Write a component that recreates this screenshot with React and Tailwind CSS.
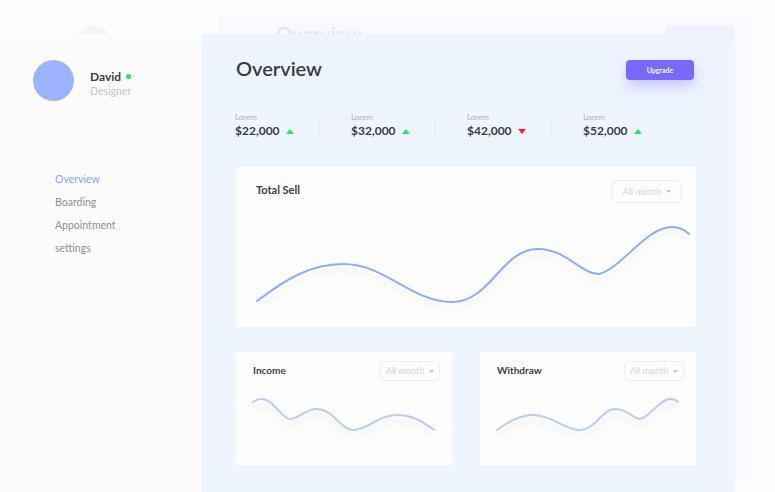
import { ChevronDown } from 'lucide-react';

const stats = [
  { label: 'Lorem', value: '$22,000', up: true },
  { label: 'Lorem', value: '$32,000', up: true },
  { label: 'Lorem', value: '$42,000', up: false },
  { label: 'Lorem', value: '$52,000', up: true },
];

const navItems = ['Overview', 'Boarding', 'Appointment', 'settings'];

const Triangle = ({ up }) => (
  <svg width="8" height="5" viewBox="0 0 8 5" className="ml-[6px]">
    {up ? (
      <path d="M4 0 L8 5 L0 5 Z" fill="#2fe063" />
    ) : (
      <path d="M0 0 L8 0 L4 5 Z" fill="#ff1f2f" />
    )}
  </svg>
);

const MonthSelect = ({ className }) => (
  <div
    className={`flex items-center justify-center gap-[5px] rounded-[4px] border border-[#efeff2] bg-[#fdfdfd] text-[9px] text-[#d4d4da] ${className}`}
  >
    All month
    <svg width="5" height="3" viewBox="0 0 5 3">
      <path d="M0 0 L5 0 L2.5 3 Z" fill="#c4c4cc" />
    </svg>
  </div>
);

const Curve = ({ d, stroke, viewBox, width, height, id }) => (
  <svg width={width} height={height} viewBox={viewBox} className="block">
    <defs>
      <filter id={id} x="-10%" y="-30%" width="120%" height="180%">
        <feDropShadow dx="0" dy="6" stdDeviation="3.5" floodColor="#8a8fa3" floodOpacity="0.2" />
      </filter>
    </defs>
    <path d={d} fill="none" stroke={stroke} strokeWidth="2" strokeLinecap="round" filter={`url(#${id})`} />
  </svg>
);

const App = () => {
  return (
    <div
      className="relative w-[775px] h-[492px] overflow-hidden bg-[#fdfdfd]"
      style={{ fontFamily: 'Lato, "Open Sans", sans-serif' }}
    >
      {/* Ghost screen behind */}
      <div className="absolute left-[75px] top-[26px] w-[37px] h-[37px] rounded-full bg-[#f2f4fb]" />
      <div className="absolute left-[218px] top-[16px] w-[534px] h-[464px] bg-[#f8f9fe]">
        <div className="absolute left-[58px] top-[2px] text-[20px] font-semibold text-[#e3e6ee]">Overview</div>
        <div className="absolute left-[448px] top-[10px] w-[68px] h-[20px] rounded-[4px] bg-[#f1effd]" />
      </div>

      <div className="relative flex pt-[34px] h-full">
        {/* Sidebar */}
        <aside className="w-[202px] shrink-0 bg-[#fbfbfc] pl-[33px] pt-[26px]">
          <div className="flex items-center">
            <div className="w-[41px] h-[41px] rounded-full bg-[#9bb4fb]" />
            <div className="ml-[16px] mt-[6px]">
              <div className="flex items-center text-[12px] font-bold leading-[14px] text-[#3b3c48]">
                David
                <span className="ml-[5px] w-[5px] h-[5px] rounded-full bg-[#2fe063]" />
              </div>
              <div className="text-[10.5px] leading-[14px] text-[#c6c6c8]">Designer</div>
            </div>
          </div>
          <nav className="mt-[71px] ml-[22px] flex flex-col gap-[9px]">
            {navItems.map((item, i) => (
              <div
                key={item}
                className={`text-[10.5px] leading-[14px] ${i === 0 ? 'text-[#87a3f4]' : 'text-[#8f8f94]'}`}
              >
                {item}
              </div>
            ))}
          </nav>
        </aside>

        {/* Main */}
        <main className="w-[533px] shrink-0 bg-[#eef5ff] pl-[34px] pr-[39px] pt-[22px]">
          <div className="flex items-center justify-between h-[28px]">
            <h1 className="text-[20px] font-semibold leading-[28px] text-[#393a47] -mt-[4px]">Overview</h1>
            <button className="mr-[2px] w-[68px] h-[20px] rounded-[4px] bg-[#7a68f6] text-[7px] font-semibold text-white shadow-[0_6px_14px_rgba(122,104,246,0.35)]">
              Upgrade
            </button>
          </div>

          {/* Stats */}
          <div className="mt-[29px] flex -ml-[1px]">
            {stats.map((s, i) => (
              <div key={i} className="flex">
                <div className="w-[83px]">
                  <div className="text-[8px] leading-[9px] text-[#b3b3b8]">{s.label}</div>
                  <div className="mt-[1px] flex items-center text-[12px] font-bold leading-[16px] text-[#3b3c48]">
                    {s.value}
                    <Triangle up={s.up} />
                  </div>
                </div>
                {i < stats.length - 1 && (
                  <div className="mt-[2px] mr-[32px] w-px h-[25px] bg-[#e6ecf6]" />
                )}
              </div>
            ))}
          </div>

          {/* Total Sell */}
          <section className="mt-[27px] h-[160px] bg-[#fdfdfd]">
            <div className="flex items-start justify-between pl-[20px] pr-[14px] pt-[13px] h-[36px]">
              <h2 className="mt-[3px] text-[11px] font-bold leading-[14px] text-[#3b3c48]">Total Sell</h2>
              <MonthSelect className="w-[70px] h-[23px]" />
            </div>
            <Curve
              id="shadow-total"
              width={460}
              height={124}
              viewBox="0 36 460 124"
              stroke="#8eacf7"
              d="M21 134 C 50 112, 75 97, 107 97 C 150 97, 175 135, 216 135 C 255 135, 265 82, 302 82 C 330 82, 345 107, 363 107 C 385 102, 410 60, 436 60 C 445 60, 450 64, 453 67"
            />
          </section>

          {/* Bottom cards */}
          <div className="mt-[25px] flex gap-[28px]">
            <section className="w-[216px] h-[113px] bg-[#fdfdfd]">
              <div className="flex items-start justify-between pl-[17px] pr-[12px] pt-[9px] h-[30px]">
                <h2 className="mt-[2px] text-[10px] font-bold leading-[14px] text-[#3b3c48]">Income</h2>
                <MonthSelect className="w-[60px] h-[20px]" />
              </div>
              <Curve
                id="shadow-income"
                width={216}
                height={83}
                viewBox="0 30 216 83"
                stroke="#b9cbf9"
                d="M17 50 C 20 48, 22 47, 25 47 C 38 47, 46 67, 54 67 C 62 67, 70 57, 81 57 C 97 57, 105 78, 117 78 C 132 78, 142 63, 161 63 C 178 63, 190 72, 198 78"
              />
            </section>
            <section className="w-[216px] h-[113px] bg-[#fdfdfd]">
              <div className="flex items-start justify-between pl-[17px] pr-[12px] pt-[9px] h-[30px]">
                <h2 className="mt-[2px] text-[10px] font-bold leading-[14px] text-[#3b3c48]">Withdraw</h2>
                <MonthSelect className="w-[60px] h-[20px]" />
              </div>
              <Curve
                id="shadow-withdraw"
                width={216}
                height={83}
                viewBox="0 30 216 83"
                stroke="#b9cbf9"
                d="M17 78 C 28 70, 40 63, 52 63 C 72 63, 85 78, 100 78 C 115 78, 122 57, 135 57 C 148 57, 153 67, 160 67 C 168 67, 180 47, 190 47 C 194 47, 196 48, 198 50"
              />
            </section>
          </div>
        </main>
      </div>
    </div>
  );
};

export default App;
